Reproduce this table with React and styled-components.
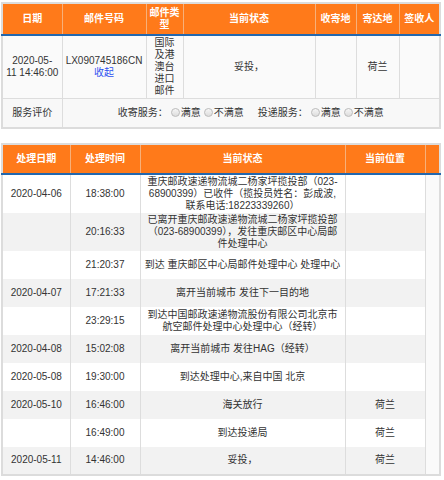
import React from 'react';
import styled, { createGlobalStyle } from 'styled-components';

const GlobalStyle = createGlobalStyle`
  body {
    margin: 0;
    background: #fff;
    font-family: "Liberation Sans", Arial, "Noto Sans CJK SC", sans-serif;
    font-size: 10px;
    color: #333;
  }
`;

const Page = styled.div`
  padding: 2px 3px 0 1px;
  display: flex;
  flex-direction: column;
  gap: 14px;
`;

const Table = styled.table`
  width: 440px;
  table-layout: fixed;
  border-collapse: collapse;
  border: 2px solid #dcdcdc;
  background: #fafafa;
`;

const HeadCell = styled.th`
  background: #ff7a1a;
  color: #fff;
  font-weight: bold;
  height: ${(p) => p.$h || 30}px;
  padding: 0;
  line-height: 12px;
  border-left: 1px solid #f7b07a;
  border-bottom: 2px solid #2367ad;
  text-align: center;
  &:first-child {
    border-left: none;
  }
`;

const Cell = styled.td`
  text-align: center;
  vertical-align: middle;
  padding: ${(p) => p.$pad || '1px 4px'};
  line-height: 12px;
  border-left: 1px solid #dddddd;
  &:first-child {
    border-left: none;
  }
`;

const InfoRow = styled.tr`
  height: 62px;
  border-bottom: 1px solid #dddddd;
`;

const RateRow = styled.tr`
  height: 29px;
  background: #f8f8f8;
`;

const Link = styled.a`
  color: #2a4ff0;
  text-decoration: none;
  cursor: pointer;
`;

const Rating = styled.span`
  display: inline-flex;
  align-items: center;
  margin-left: ${(p) => (p.$gap ? '14px' : '0')};
`;

const Radio = styled.span`
  display: inline-block;
  width: 7px;
  height: 7px;
  border-radius: 50%;
  border: 1px solid #bdbdbd;
  background: linear-gradient(#f6f6f6, #dcdcdc);
  margin: 0 1px 0 3px;
`;

const TrackRow = styled.tr`
  height: 28px;
  background: ${(p) => (p.$odd ? '#f2f2f2' : '#ffffff')};
`;

const Spacer = styled.td`
  background: #fafafa;
  border-left: 1px solid #dddddd;
`;

const track = [
  ['2020-04-06', '18:38:00', '重庆邮政速递物流城二杨家坪揽投部（023-68900399）已收件（揽投员姓名：彭成波,联系电话:18223339260）', ''],
  ['', '20:16:33', '已离开重庆邮政速递物流城二杨家坪揽投部（023-68900399），发往重庆邮区中心局邮件处理中心', ''],
  ['', '21:20:37', '到达 重庆邮区中心局邮件处理中心 处理中心', ''],
  ['2020-04-07', '17:21:33', '离开当前城市 发往下一目的地', ''],
  ['', '23:29:15', '到达中国邮政速递物流股份有限公司北京市航空邮件处理中心处理中心（经转）', ''],
  ['2020-04-08', '15:02:08', '离开当前城市 发往HAG（经转）', ''],
  ['2020-05-08', '19:30:00', '到达处理中心,来自中国 北京', ''],
  ['2020-05-10', '16:46:00', '海关放行', '荷兰'],
  ['', '16:49:00', '到达投递局', '荷兰'],
  ['2020-05-11', '14:46:00', '妥投，', '荷兰'],
];

function MailInfo() {
  return (
    <Table>
      <colgroup>
        <col style={{ width: 60 }} />
        <col style={{ width: 84 }} />
        <col style={{ width: 37 }} />
        <col style={{ width: 132 }} />
        <col style={{ width: 41 }} />
        <col style={{ width: 43 }} />
        <col />
      </colgroup>
      <thead>
        <tr>
          <HeadCell>日期</HeadCell>
          <HeadCell>邮件号码</HeadCell>
          <HeadCell>邮件类<br />型</HeadCell>
          <HeadCell>当前状态</HeadCell>
          <HeadCell>收寄地</HeadCell>
          <HeadCell>寄达地</HeadCell>
          <HeadCell>签收人</HeadCell>
        </tr>
      </thead>
      <tbody>
        <InfoRow>
          <Cell $pad="1px 1px">2020-05-<br />11 14:46:00</Cell>
          <Cell $pad="1px 2px">
            LX090745186CN
            <br />
            <Link>收起</Link>
          </Cell>
          <Cell>国际及港澳台进口邮件</Cell>
          <Cell>妥投，</Cell>
          <Cell></Cell>
          <Cell>荷兰</Cell>
          <Cell></Cell>
        </InfoRow>
        <RateRow>
          <Cell>服务评价</Cell>
          <Cell colSpan={6}>
            <Rating>
              收寄服务：<Radio />满意<Radio />不满意
            </Rating>
            <Rating $gap>
              投递服务：<Radio />满意<Radio />不满意
            </Rating>
          </Cell>
        </RateRow>
      </tbody>
    </Table>
  );
}

function TrackList() {
  return (
    <Table>
      <colgroup>
        <col style={{ width: 68 }} />
        <col style={{ width: 70 }} />
        <col style={{ width: 205 }} />
        <col style={{ width: 80 }} />
        <col />
      </colgroup>
      <thead>
        <tr>
          <HeadCell $h={28}>处理日期</HeadCell>
          <HeadCell $h={28}>处理时间</HeadCell>
          <HeadCell $h={28}>当前状态</HeadCell>
          <HeadCell $h={28}>当前位置</HeadCell>
          <HeadCell $h={28}></HeadCell>
        </tr>
      </thead>
      <tbody>
        {track.map(([date, time, status, place], i) => (
          <TrackRow key={i} $odd={i % 2 === 1}>
            <Cell>{date}</Cell>
            <Cell>{time}</Cell>
            <Cell $pad="1px 4px">{status}</Cell>
            <Cell>{place}</Cell>
            <Spacer />
          </TrackRow>
        ))}
      </tbody>
    </Table>
  );
}

export default function App() {
  return (
    <>
      <GlobalStyle />
      <Page>
        <MailInfo />
        <TrackList />
      </Page>
    </>
  );
}
